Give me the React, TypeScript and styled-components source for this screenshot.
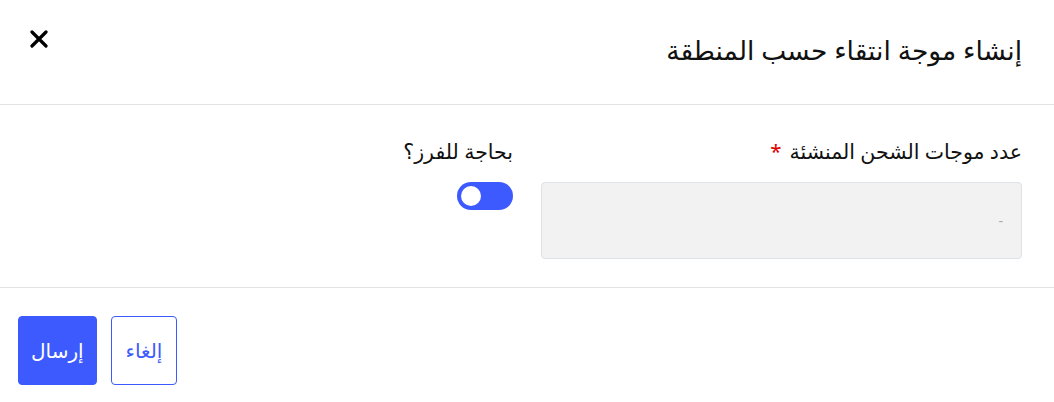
import React from "react";
import styled, { createGlobalStyle } from "styled-components";

const GlobalStyle = createGlobalStyle`
    html, body {
        margin: 0;
        padding: 0;
        background: #fff;
    }
    body {
        font-family: "Noto Sans", "DejaVu Sans", sans-serif;
        color: #111;
    }
`;

const Dialog = styled.div`
    direction: rtl;
    width: 1054px;
    height: 402px;
    display: flex;
    flex-direction: column;
    background: #fff;
`;

const Header = styled.div`
    height: 105px;
    box-sizing: border-box;
    border-bottom: 1px solid #e3e3e3;
    display: flex;
    align-items: center;
    justify-content: space-between;
    padding: 0 32px 0 28px;
`;

const Title = styled.h2`
    margin: 0 0 4px 0;
    font-size: 26.5px;
    font-weight: 400;
    color: #111;
`;

const CloseButton = styled.button`
    border: none;
    background: none;
    padding: 0;
    width: 22px;
    height: 22px;
    margin-bottom: 26px;
    display: flex;
    align-items: center;
    justify-content: center;
    cursor: pointer;
`;

const Body = styled.div`
    height: 183px;
    box-sizing: border-box;
    border-bottom: 1px solid #e3e3e3;
    padding: 31px 32px 0 32px;
    display: grid;
    grid-template-columns: 1fr 1fr;
    column-gap: 28px;
`;

const Field = styled.div`
    display: flex;
    flex-direction: column;
    align-items: flex-start;
    gap: 16px;
`;

const Label = styled.label`
    font-size: 20.5px;
    line-height: 30px;
    color: #111;
`;

const Required = styled.span`
    color: #e00000;
    margin-right: 8px;
`;

const Input = styled.input`
    width: 100%;
    height: 77px;
    box-sizing: border-box;
    background: #f2f2f2;
    border: 1px solid #dde2e6;
    border-radius: 4px;
    padding: 0 18px;
    font-family: inherit;
    font-size: 14px;
    color: #111;
    &::placeholder {
        color: #aaa;
    }
`;

const Toggle = styled.button<{ $on: boolean }>`
    width: 56px;
    height: 28px;
    border: none;
    border-radius: 14px;
    background: #3d5afe;
    position: relative;
    padding: 0;
    cursor: pointer;
    &::after {
        content: "";
        position: absolute;
        top: 4px;
        right: ${p => (p.$on ? "4px" : "32px")};
        width: 20px;
        height: 20px;
        border-radius: 50%;
        background: #fff;
    }
`;

const Footer = styled.div`
    flex: 1;
    display: flex;
    align-items: flex-start;
    justify-content: flex-end;
    gap: 14px;
    padding: 28px 18px 0 18px;
`;

const ActionButton = styled.button<{ $primary?: boolean }>`
    height: 69px;
    padding: 0 ${p => (p.$primary ? "12px" : "14px")};
    box-sizing: border-box;
    border-radius: 4px;
    font-family: inherit;
    font-size: 20px;
    cursor: pointer;
    border: 1px solid #3d5afe;
    background: ${p => (p.$primary ? "#3d5afe" : "#fff")};
    color: ${p => (p.$primary ? "#fff" : "#3d5afe")};
`;

export default function App() {
    return (
        <>
            <GlobalStyle />
            <Dialog>
                <Header>
                    <Title>إنشاء موجة انتقاء حسب المنطقة</Title>
                    <CloseButton aria-label="close">
                        <svg width="18" height="18" viewBox="0 0 18 18">
                            <path d="M2 2 L16 16 M16 2 L2 16" stroke="#000" strokeWidth="3.2" strokeLinecap="round" />
                        </svg>
                    </CloseButton>
                </Header>
                <Body>
                    <Field>
                        <Label>
                            عدد موجات الشحن المنشئة<Required>*</Required>
                        </Label>
                        <Input placeholder="-" />
                    </Field>
                    <Field>
                        <Label>بحاجة للفرز؟</Label>
                        <Toggle $on={false} aria-label="toggle" />
                    </Field>
                </Body>
                <Footer>
                    <ActionButton>إلغاء</ActionButton>
                    <ActionButton $primary>إرسال</ActionButton>
                </Footer>
            </Dialog>
        </>
    );
}
